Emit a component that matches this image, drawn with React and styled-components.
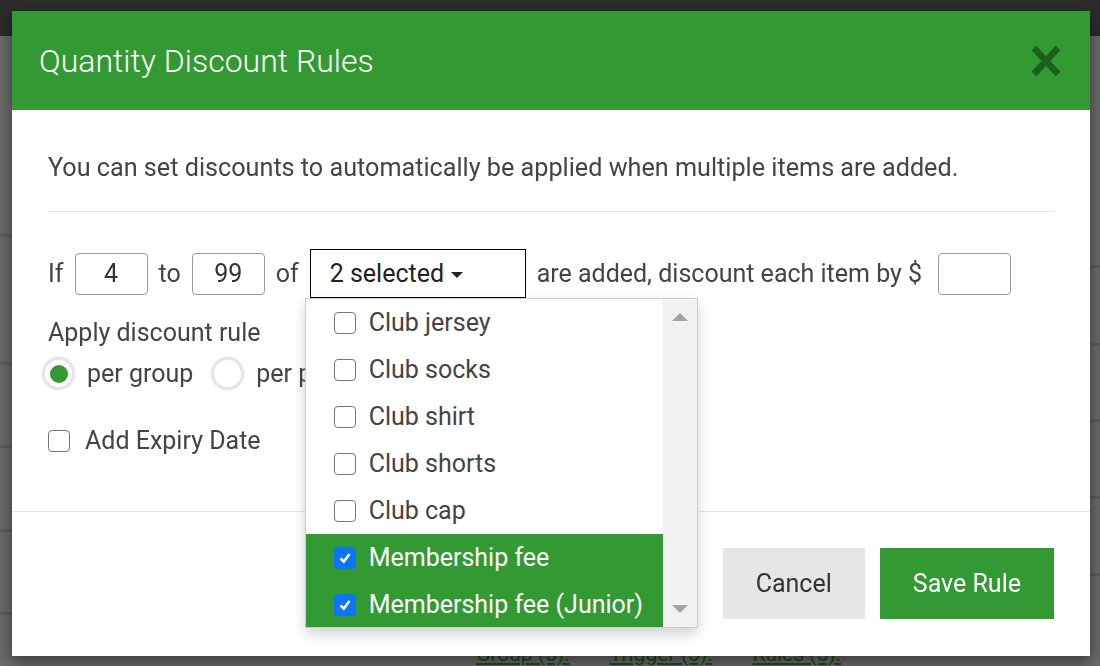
import React, { useState } from "react";
import styled, { createGlobalStyle } from "styled-components";

const GREEN = "#339933";

const GlobalStyle = createGlobalStyle`
  html, body {
    margin: 0;
    padding: 0;
    height: 100%;
  }
  body {
    font-family: Roboto, "Liberation Sans", sans-serif;
    background: #6b6b6b;
    overflow: hidden;
  }
  * {
    box-sizing: border-box;
  }
`;

// ---- page behind the modal ----
const Page = styled.div`
  height: 666px;
  display: flex;
  flex-direction: column;
`;

const TopBar = styled.div`
  flex: none;
  height: 36px;
  background: #2c2c2c;
`;

const BackRows = styled.div`
  flex: 1;
  display: flex;
  justify-content: space-between;
`;

const BackColumn = styled.div`
  width: 14px;
  display: flex;
  flex-direction: column;
`;

const BackRow = styled.div`
  flex: none;
  height: ${(p) => p.$h}px;
  border-bottom: 3px solid #5e5e5e;
`;

const BackLinks = styled.div`
  flex: none;
  display: flex;
  gap: 40px;
  padding-left: 476px;
  font-size: 21px;
  line-height: 24px;
`;

const BackLink = styled.span`
  color: #1c4a1c;
  text-decoration: underline;
`;

// ---- modal ----
const Overlay = styled.div`
  position: fixed;
  inset: 0;
  display: flex;
  padding: 11px 10px 10px 12px;
`;

const Modal = styled.div`
  flex: 1;
  display: flex;
  flex-direction: column;
  background: #fff;
  box-shadow: 0 5px 15px rgba(0, 0, 0, 0.5);
`;

const Header = styled.div`
  flex: none;
  height: 99px;
  display: flex;
  align-items: center;
  justify-content: space-between;
  padding: 0 29px 0 27px;
  background: ${GREEN};
`;

const Title = styled.h4`
  margin: 0;
  font-size: 32px;
  font-weight: 300;
  color: #fff;
`;

const CloseButton = styled.button`
  display: flex;
  padding: 0;
  border: none;
  background: none;
  cursor: pointer;
`;

const Body = styled.div`
  flex: 1;
  padding: 42px 36px 0;
  color: #444;
`;

const Intro = styled.p`
  margin: 0;
  font-size: 25.2px;
  line-height: 32px;
`;

const Divider = styled.div`
  height: 1px;
  margin-top: 27px;
  background: #e5e5e5;
`;

const RuleRow = styled.div`
  display: flex;
  align-items: center;
  gap: 11px;
  margin-top: 37px;
  font-size: 25px;
`;

const NumberInput = styled.input`
  width: 73px;
  height: 42px;
  border: 1px solid #999;
  border-radius: 4px;
  text-align: center;
  font: inherit;
  color: #333;
  outline: none;
`;

const AmountInput = styled(NumberInput)`
  margin-left: 5px;
`;

const DropdownWrap = styled.div`
  position: relative;
`;

const DropdownButton = styled.button`
  width: 216px;
  height: 49px;
  display: flex;
  align-items: center;
  gap: 7px;
  padding: 0 0 0 19px;
  border: 1px solid #000;
  background: #fff;
  font: inherit;
  color: #222;
`;

const Caret = styled.span`
  width: 0;
  height: 0;
  margin-top: 2px;
  border-top: 6px solid #222;
  border-left: 6px solid transparent;
  border-right: 6px solid transparent;
`;

const Menu = styled.div`
  position: absolute;
  top: 100%;
  left: -5px;
  z-index: 2;
  width: 393px;
  height: 330px;
  display: flex;
  overflow: hidden;
  border: 1px solid #ccc;
  background: #fff;
  box-shadow: 0 6px 12px rgba(0, 0, 0, 0.175);
`;

const OptionList = styled.ul`
  flex: 1;
  margin: 0;
  padding: 0;
  list-style: none;
`;

const Option = styled.li`
  height: 47px;
  display: flex;
  align-items: center;
  gap: 13px;
  padding-left: 28px;
  font-size: 25px;
  background: ${(p) => (p.$selected ? GREEN : "#fff")};
  color: ${(p) => (p.$selected ? "#fff" : "#444")};
`;

const Box = styled.span`
  flex: none;
  width: 22px;
  height: 22px;
  display: flex;
  align-items: center;
  justify-content: center;
  border-radius: 4px;
  border: ${(p) => (p.$checked ? "none" : "1.5px solid #767676")};
  background: ${(p) => (p.$checked ? "#0b75f5" : "#fff")};
`;

const Scrollbar = styled.div`
  flex: none;
  width: 34px;
  display: flex;
  flex-direction: column;
  align-items: center;
  justify-content: space-between;
  padding: 14px 0 14px;
  background: #f1f1f1;
`;

const Arrow = styled.span`
  width: 0;
  height: 0;
  border-left: 8px solid transparent;
  border-right: 8px solid transparent;
  ${(p) =>
    p.$down
      ? "border-top: 8px solid #a3a3a3;"
      : "border-bottom: 8px solid #a3a3a3;"}
`;

const ApplyLabel = styled.div`
  margin-top: 20px;
  font-size: 25px;
  line-height: 30px;
`;

const RadioRow = styled.div`
  display: flex;
  align-items: center;
  margin: 9px 0 0 -6px;
  font-size: 25px;
`;

const Radio = styled.span`
  flex: none;
  width: 33px;
  height: 33px;
  display: flex;
  align-items: center;
  justify-content: center;
  border-radius: 50%;
  border: 3px solid #e6e6e6;
  background: #fff;
  box-shadow: 0 0 2px rgba(0, 0, 0, 0.12);

  &::after {
    content: "";
    width: 18px;
    height: 18px;
    border-radius: 50%;
    background: ${(p) => (p.$checked ? GREEN : "transparent")};
  }
`;

const RadioLabel = styled.span`
  margin: 0 18px 0 12px;
`;

const CheckRow = styled.label`
  display: flex;
  align-items: center;
  gap: 15px;
  margin-top: 36px;
  font-size: 25px;
`;

const Footer = styled.div`
  flex: none;
  display: flex;
  justify-content: flex-end;
  gap: 15px;
  padding: 36px 36px 37px;
  border-top: 1px solid #e5e5e5;
`;

const Button = styled.button`
  height: 71px;
  padding: 0 33px;
  border: none;
  font-family: inherit;
  font-size: 25px;
  background: ${(p) => (p.$primary ? GREEN : "#e6e6e6")};
  color: ${(p) => (p.$primary ? "#fff" : "#333")};
  cursor: pointer;
`;

const items = [
  { name: "Club jersey", checked: false },
  { name: "Club socks", checked: false },
  { name: "Club shirt", checked: false },
  { name: "Club shorts", checked: false },
  { name: "Club cap", checked: false },
  { name: "Membership fee", checked: true },
  { name: "Membership fee (Junior)", checked: true },
];

function Tick() {
  return (
    <svg width="14" height="14" viewBox="0 0 14 14">
      <path d="M2.5 7.5 L5.8 10.6 L11.5 3" fill="none" stroke="#fff" strokeWidth="2.6" />
    </svg>
  );
}

function CloseIcon() {
  return (
    <svg width="30" height="32" viewBox="0 0 30 32">
      <path d="M3 3 L27 29 M27 3 L3 29" stroke="#1d5e1d" strokeWidth="6.5" />
    </svg>
  );
}

export default function App() {
  const [perGroup, setPerGroup] = useState(true);

  return (
    <>
      <GlobalStyle />
      <Page>
        <TopBar />
        <BackRows>
          <BackColumn>
            {[201, 128, 83, 84, 83].map((h, i) => (
              <BackRow key={i} $h={h} />
            ))}
          </BackColumn>
          <BackColumn>
            {[232, 78, 76, 77, 77].map((h, i) => (
              <BackRow key={i} $h={h} />
            ))}
          </BackColumn>
        </BackRows>
        <BackLinks>
          <BackLink>Group (5).</BackLink>
          <BackLink>Trigger (5).</BackLink>
          <BackLink>Rules (5).</BackLink>
        </BackLinks>
      </Page>

      <Overlay>
        <Modal>
          <Header>
            <Title>Quantity Discount Rules</Title>
            <CloseButton aria-label="Close">
              <CloseIcon />
            </CloseButton>
          </Header>

          <Body>
            <Intro>
              You can set discounts to automatically be applied when multiple
              items are added.
            </Intro>
            <Divider />

            <RuleRow>
              <span>If</span>
              <NumberInput defaultValue="4" />
              <span>to</span>
              <NumberInput defaultValue="99" />
              <span>of</span>
              <DropdownWrap>
                <DropdownButton>
                  2 selected <Caret />
                </DropdownButton>
                <Menu>
                  <OptionList>
                    {items.map((item) => (
                      <Option key={item.name} $selected={item.checked}>
                        <Box $checked={item.checked}>{item.checked && <Tick />}</Box>
                        {item.name}
                      </Option>
                    ))}
                  </OptionList>
                  <Scrollbar>
                    <Arrow />
                    <Arrow $down />
                  </Scrollbar>
                </Menu>
              </DropdownWrap>
              <span>are added, discount each item by $</span>
              <AmountInput defaultValue="" />
            </RuleRow>

            <ApplyLabel>Apply discount rule</ApplyLabel>
            <RadioRow>
              <Radio $checked={perGroup} onClick={() => setPerGroup(true)} />
              <RadioLabel>per group</RadioLabel>
              <Radio $checked={!perGroup} onClick={() => setPerGroup(false)} />
              <RadioLabel>per product</RadioLabel>
            </RadioRow>

            <CheckRow>
              <Box />
              Add Expiry Date
            </CheckRow>
          </Body>

          <Footer>
            <Button>Cancel</Button>
            <Button $primary>Save Rule</Button>
          </Footer>
        </Modal>
      </Overlay>
    </>
  );
}
